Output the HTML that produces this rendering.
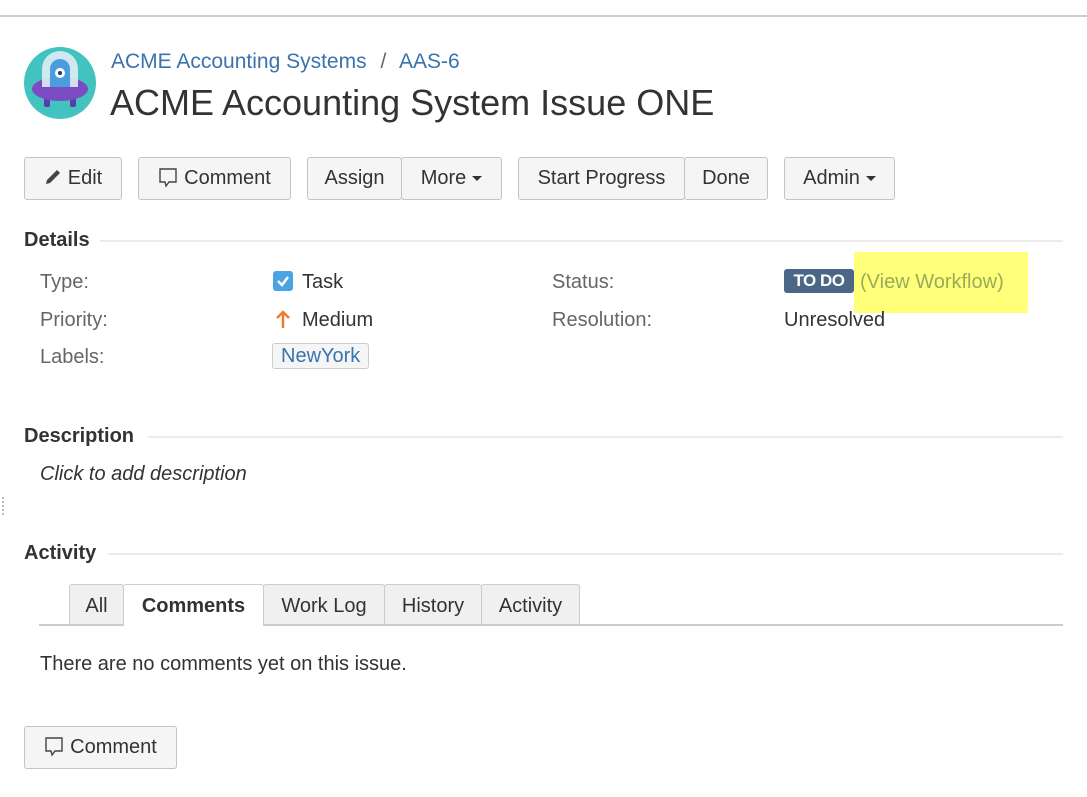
<!DOCTYPE html>
<html><head><style>
body{margin:0;width:1087px;height:797px;background:#fff;font-family:"Liberation Sans",Arial,sans-serif;color:#333;position:relative;overflow:hidden}
.a{position:absolute;white-space:nowrap}
.btn{position:absolute;top:157px;height:41px;border:1.5px solid #c4c4c4;background:#f5f5f5;border-radius:3px;font-size:20px;line-height:41px;text-align:center;color:#333;box-sizing:content-box}
.lbl{font-size:20px;color:#666}
.val{font-size:20px;color:#333}
.hd{font-size:20px;font-weight:bold;color:#333}
.hr{position:absolute;height:2px;background:#ebebeb}
.tab{position:absolute;top:584px;height:40px;border:1.5px solid #ccc;border-bottom:none;background:#f0f0f0;font-size:20px;line-height:42px;text-align:center;box-sizing:border-box;border-radius:3px 3px 0 0}
.caret{display:inline-block;width:0;height:0;border-left:5px solid transparent;border-right:5px solid transparent;border-top:5px solid #333;vertical-align:middle;margin-left:6px}
</style></head><body>
<div style="position:absolute;top:15px;left:0;width:1087px;height:2px;background:#ccc"></div>
<svg class="a" style="left:24px;top:47px" width="72" height="72" viewBox="0 0 72 72">
<circle cx="36" cy="36" r="36" fill="#43c3c0"/>
<rect x="20" y="50" width="6" height="10" rx="2" fill="#5640a8"/><rect x="46" y="50" width="6" height="10" rx="2" fill="#5640a8"/>
<ellipse cx="36" cy="42" rx="28" ry="12" fill="#7b4bc4"/>
<path d="M18 40 V22 a18 18 0 0 1 36 0 V40 Z" fill="#e0ecf5" opacity=".9"/>
<path d="M26 40 V22 a10 10 0 0 1 20 0 V40 Z" fill="#4a9ee0"/>
<circle cx="36" cy="26" r="5" fill="#fff"/><circle cx="36" cy="26" r="2" fill="#1d3d70"/>
</svg>
<div class="a" style="left:111px;top:50px;font-size:21px;color:#3b73af">ACME Accounting Systems <span style="color:#666;margin:0 8px">/</span> AAS-6</div>
<div class="a" style="left:110px;top:82px;font-size:36px;color:#333">ACME Accounting System Issue ONE</div>

<div class="btn" style="left:24px;width:96px"><svg width="18" height="18" viewBox="0 0 18 18" style="vertical-align:-2px;margin-right:6px"><path d="M2 16 L3 12 L13 2 L16 5 L6 15 Z" fill="#444"/></svg>Edit</div>
<div class="btn" style="left:138px;width:151px"><svg width="20" height="22" viewBox="0 0 20 22" style="vertical-align:-5px;margin-right:6px"><path d="M2 2 H18 V15 H11 L8 19 L7 15 H2 Z" fill="none" stroke="#444" stroke-width="1.4"/></svg>Comment</div>
<div class="btn" style="left:307px;width:93px">Assign</div>
<div class="btn" style="left:401px;width:99px">More<span class="caret"></span></div>
<div class="btn" style="left:518px;width:165px">Start Progress</div>
<div class="btn" style="left:684px;width:82px">Done</div>
<div class="btn" style="left:784px;width:109px">Admin<span class="caret"></span></div>

<div class="a hd" style="left:24px;top:229px">Details</div>
<div class="hr" style="left:100px;top:240px;width:963px"></div>
<div class="a lbl" style="left:40px;top:271px">Type:</div>
<div class="a lbl" style="left:40px;top:309px">Priority:</div>
<div class="a lbl" style="left:40px;top:346px">Labels:</div>
<div class="a" style="left:273px;top:271px;width:20px;height:20px;background:#4ba3e3;border-radius:3px"><svg width="20" height="20"><path d="M5 10 L9 14 L15 6" stroke="#fff" stroke-width="2.5" fill="none"/></svg></div>
<div class="a val" style="left:302px;top:271px">Task</div>
<svg class="a" style="left:275px;top:309px" width="16" height="20" viewBox="0 0 16 20"><path d="M8 19 V3 M2 9 L8 3 L14 9" stroke="#f07b2a" stroke-width="2.4" fill="none"/></svg>
<div class="a val" style="left:302px;top:309px">Medium</div>
<div class="a" style="left:272px;top:343px;height:24px;border:1.5px solid #ccc;border-radius:3px;background:#f5f5f5;padding:0 8px;font-size:20px;line-height:24px;color:#3b73af">NewYork</div>
<div class="a lbl" style="left:552px;top:271px">Status:</div>
<div class="a lbl" style="left:552px;top:309px">Resolution:</div>
<div class="a" style="left:854px;top:252px;width:174px;height:61px;background:#ffff7a"></div>
<div class="a" style="left:784px;top:269px;width:70px;height:24px;background:#4a6785;border-radius:3px;color:#fff;font-weight:bold;font-size:17px;line-height:24px;text-align:center;letter-spacing:-0.5px">TO DO</div>
<div class="a" style="left:860px;top:271px;font-size:20px;color:#9aab5a">(View Workflow)</div>
<div class="a val" style="left:784px;top:309px">Unresolved</div>

<div class="a hd" style="left:24px;top:425px">Description</div>
<div class="hr" style="left:148px;top:436px;width:915px"></div>
<div class="a" style="left:40px;top:463px;font-size:20px;font-style:italic;color:#333">Click to add description</div>

<div class="a hd" style="left:24px;top:542px">Activity</div>
<div class="hr" style="left:108px;top:553px;width:955px"></div>
<div class="tab" style="left:69px;width:55px">All</div>
<div class="tab" style="left:123px;width:141px;background:#fff;font-weight:bold;height:42px;z-index:2">Comments</div>
<div class="tab" style="left:263px;width:122px">Work Log</div>
<div class="tab" style="left:384px;width:98px">History</div>
<div class="tab" style="left:481px;width:99px">Activity</div>
<div class="hr" style="left:39px;top:624px;width:1024px;background:#ccc"></div>
<div class="a val" style="left:40px;top:653px">There are no comments yet on this issue.</div>

<div class="btn" style="left:24px;top:726px;width:151px"><svg width="20" height="22" viewBox="0 0 20 22" style="vertical-align:-5px;margin-right:6px"><path d="M2 2 H18 V15 H11 L8 19 L7 15 H2 Z" fill="none" stroke="#444" stroke-width="1.4"/></svg>Comment</div>
<div class="a" style="left:2px;top:497px;width:2px;height:18px;border-left:2px dotted #bbb"></div>
</body></html>
